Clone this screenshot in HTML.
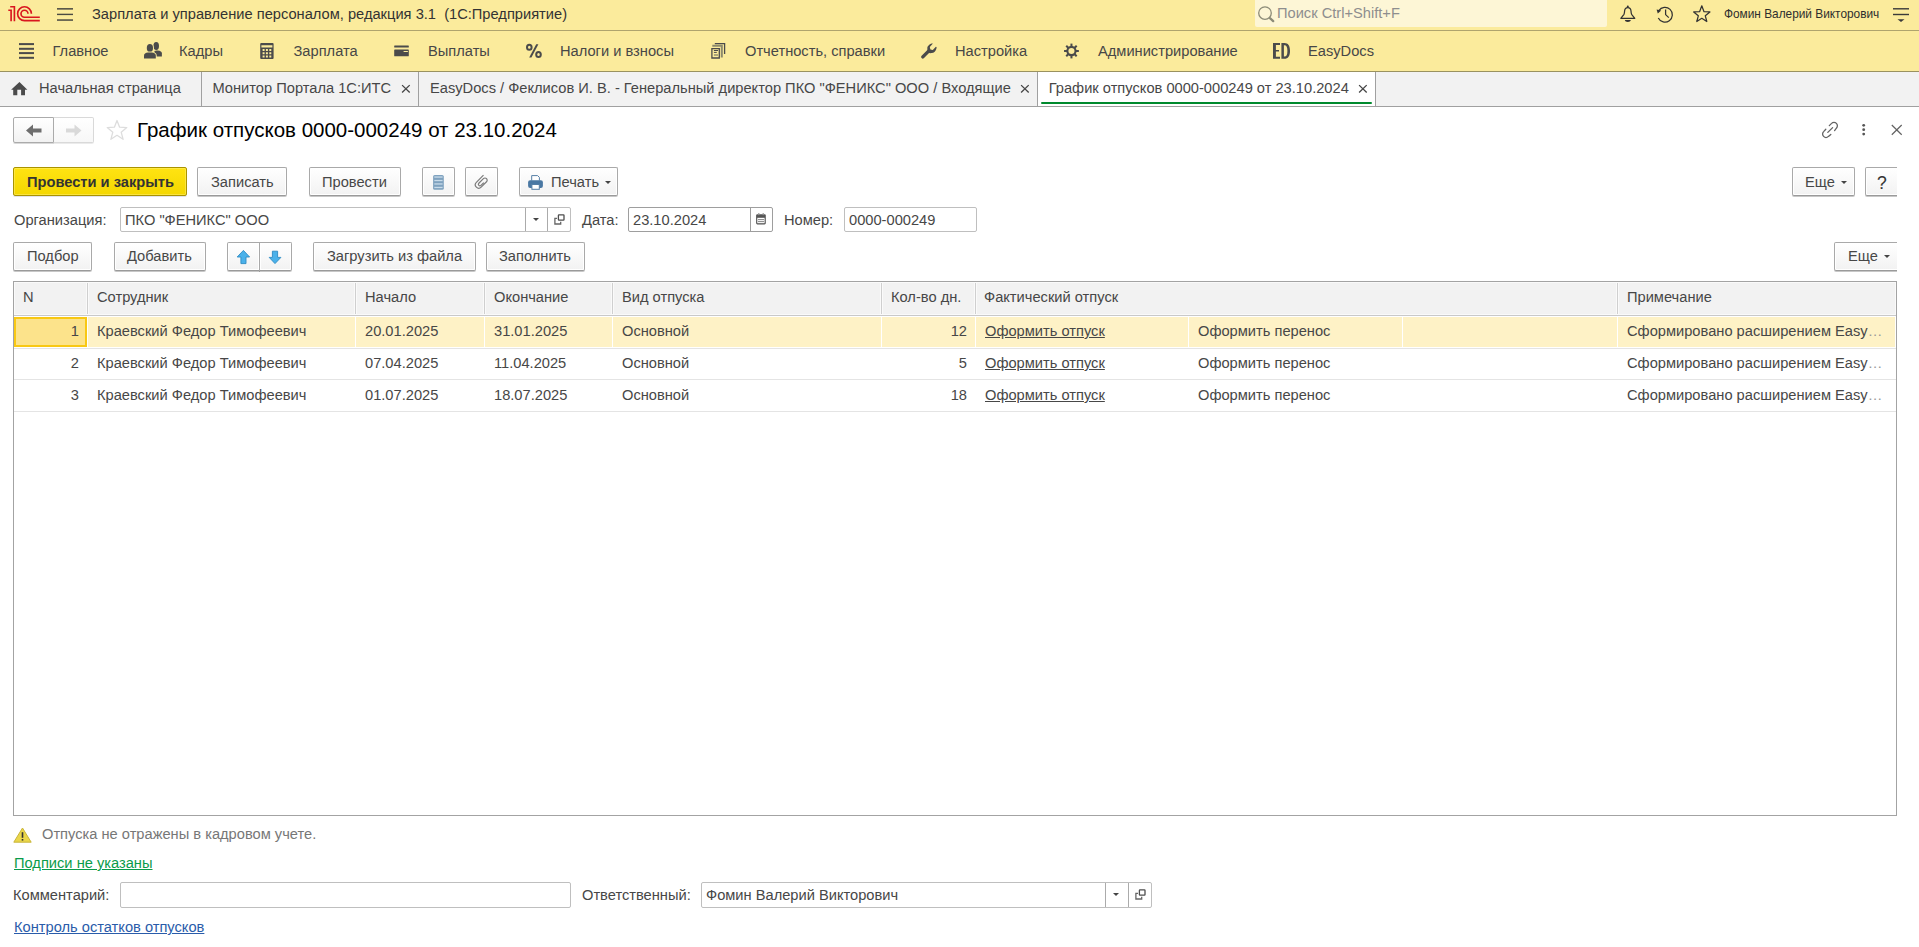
<!DOCTYPE html>
<html><head><meta charset="utf-8">
<style>
html,body{margin:0;padding:0;}
body{width:1919px;height:947px;overflow:hidden;position:relative;background:#fff;font-family:"Liberation Sans",sans-serif;font-size:14.667px;color:#474747;}
.a{position:absolute;}
.t{position:absolute;white-space:pre;line-height:16px;}
#top{left:0;top:0;width:1919px;height:30px;background:#FBEB9C;}
#topline{left:0;top:30px;width:1919px;height:1px;background:#AFA46D;}
#sec{left:0;top:31px;width:1919px;height:40px;background:#FBEB9C;}
#secline{left:0;top:71px;width:1919px;height:1px;background:#9A9260;}
#tabs{left:0;top:72px;width:1919px;height:34px;background:#F2F2F2;}
#tabline{left:0;top:106px;width:1919px;height:1px;background:#A0A0A0;}
.tsep{position:absolute;top:72px;width:1px;height:34px;background:#A0A0A0;}
.btn{position:absolute;box-sizing:border-box;border:1px solid #A9A9A9;border-bottom-color:#9A9A9A;border-radius:2px;background:linear-gradient(#FFFFFF,#F2F2F2);box-shadow:inset 0 0 0 1px #fff,0 1px 0 rgba(0,0,0,.22);}
.inp{position:absolute;box-sizing:border-box;border:1px solid #BFBFBF;border-radius:2px;background:#fff;}
.hsep{position:absolute;top:283px;width:1px;height:31px;background:#CFCFCF;}
.rsep{position:absolute;width:1px;background:#fff;}
.rowline{position:absolute;left:14px;width:1882px;height:1px;background:#E6E6E6;}
.lnk{text-decoration:underline;}
</style></head>
<body>
<!-- top bar -->
<div id="top" class="a"></div>
<div id="topline" class="a"></div>
<div id="sec" class="a"></div>
<div id="secline" class="a"></div>
<div id="tabs" class="a"></div>
<div id="tabline" class="a"></div>

<div class="t" style="left:92px;top:6px;color:#333;">Зарплата и управление персоналом, редакция 3.1  (1С:Предприятие)</div>
<div class="a" style="left:1255px;top:0;width:352px;height:27px;background:#FDF6D6;border-radius:0 0 2px 2px;"></div>
<div class="t" style="left:1277px;top:5px;color:#8E8E8E;">Поиск Ctrl+Shift+F</div>
<div class="t" style="left:1724px;top:6px;font-size:11.85px;color:#2E2E2E;">Фомин Валерий Викторович</div>

<!-- sections -->
<div class="t" style="left:52.5px;top:43px;">Главное</div>
<div class="t" style="left:179px;top:43px;">Кадры</div>
<div class="t" style="left:293.5px;top:43px;">Зарплата</div>
<div class="t" style="left:428px;top:43px;">Выплаты</div>
<div class="t" style="left:560px;top:43px;">Налоги и взносы</div>
<div class="t" style="left:745px;top:43px;">Отчетность, справки</div>
<div class="t" style="left:955px;top:43px;">Настройка</div>
<div class="t" style="left:1098px;top:43px;">Администрирование</div>
<div class="t" style="left:1308px;top:43px;">EasyDocs</div>

<!-- tabs -->
<div class="a" style="left:1038px;top:72px;width:337px;height:34px;background:#fff;"></div>
<div class="tsep" style="left:201px;"></div>
<div class="tsep" style="left:418px;"></div>
<div class="tsep" style="left:1037px;"></div>
<div class="tsep" style="left:1375px;"></div>
<div class="a" style="left:1041px;top:102px;width:331px;height:2px;background:#008A2E;border-radius:1px;"></div>
<div class="t" style="left:39px;top:80px;">Начальная страница</div>
<div class="t" style="left:212.5px;top:80px;">Монитор Портала 1С:ИТС</div>
<div class="t" style="left:430px;top:80px;">EasyDocs / Феклисов И. В. - Генеральный директор ПКО "ФЕНИКС" ООО / Входящие</div>
<div class="t" style="left:1048.7px;top:80px;">График отпусков 0000-000249 от 23.10.2024</div>

<!-- form header -->
<div class="t" style="left:137px;top:120px;font-size:20.5px;line-height:20px;color:#000;">График отпусков 0000-000249 от 23.10.2024</div>


<!-- nav buttons -->
<div class="a" style="left:13px;top:117px;width:41px;height:26px;box-sizing:border-box;border:1px solid #ABABAB;border-radius:2px 0 0 2px;background:linear-gradient(#fff,#F2F2F2);box-shadow:0 1px 0 rgba(0,0,0,.15);"></div>
<div class="a" style="left:54px;top:117px;width:40px;height:26px;box-sizing:border-box;border:1px solid #D9D9D9;border-left:none;border-radius:0 2px 2px 0;background:linear-gradient(#fff,#F7F7F7);box-shadow:0 1px 0 rgba(0,0,0,.08);"></div>
<svg class="a" style="left:26px;top:124px" width="16" height="13" viewBox="0 0 16 13"><path d="M0 6.5 L7 0.5 V4.5 H15.5 V8.5 H7 V12.5 Z" fill="#6E6E6E"/></svg>
<svg class="a" style="left:66px;top:124px" width="16" height="13" viewBox="0 0 16 13"><path d="M15.5 6.5 L8.5 0.5 V4.5 H0 V8.5 H8.5 V12.5 Z" fill="#D9D9D9"/></svg>
<svg class="a" style="left:106px;top:119px" width="22" height="23" viewBox="0 0 22 23"><path d="M11 1.5 L13.6 8.2 L20.8 8.6 L15.2 13.2 L17.1 20.3 L11 16.3 L4.9 20.3 L6.8 13.2 L1.2 8.6 L8.4 8.2 Z" fill="none" stroke="#DDDDDD" stroke-width="1.3" stroke-linejoin="round"/></svg>

<!-- command bar 1 -->
<div class="a" style="left:13px;top:167px;width:174px;height:29px;box-sizing:border-box;border:1px solid #A99300;border-radius:2px;background:linear-gradient(#FFE312,#F4D700);box-shadow:inset 0 0 0 1px rgba(255,240,120,.5),0 1px 0 rgba(60,60,120,.15);"></div>
<div class="t" style="left:27px;top:174px;font-weight:bold;color:#333;">Провести и закрыть</div>
<div class="btn" style="left:197px;top:167px;width:90px;height:29px;"></div>
<div class="t" style="left:211px;top:174px;">Записать</div>
<div class="btn" style="left:309px;top:167px;width:92px;height:29px;"></div>
<div class="t" style="left:322px;top:174px;">Провести</div>
<div class="btn" style="left:422px;top:167px;width:33px;height:29px;"></div>
<div class="btn" style="left:465px;top:167px;width:33px;height:29px;"></div>
<div class="btn" style="left:519px;top:167px;width:99px;height:29px;"></div>
<div class="t" style="left:551px;top:174px;">Печать</div>
<svg class="a" style="left:605px;top:181px" width="7" height="4" viewBox="0 0 7 4"><path d="M0 0 H6 L3 3 Z" fill="#444"/></svg>

<div class="btn" style="left:1792px;top:167px;width:63px;height:29px;"></div>
<div class="t" style="left:1805px;top:174px;">Еще</div>
<svg class="a" style="left:1841px;top:181px" width="7" height="4" viewBox="0 0 7 4"><path d="M0 0 H6 L3 3 Z" fill="#444"/></svg>
<div class="btn" style="left:1865px;top:167px;width:40px;height:29px;"></div>
<div class="t" style="left:1877px;top:175px;font-size:17.5px;color:#333;-webkit-text-stroke:0.12px #333;">?</div>

<!-- fields row -->
<div class="t" style="left:14px;top:212px;">Организация:</div>
<div class="inp" style="left:120px;top:207px;width:451px;height:25px;"></div>
<div class="a" style="left:525px;top:208px;width:1px;height:23px;background:#ABABAB;"></div>
<div class="a" style="left:547px;top:208px;width:1px;height:23px;background:#ABABAB;"></div>
<svg class="a" style="left:533px;top:218px" width="6" height="3" viewBox="0 0 6 3"><path d="M0 0 H6 L3 3 Z" fill="#444"/></svg>
<div class="t" style="left:125px;top:212px;">ПКО "ФЕНИКС" ООО</div>
<div class="t" style="left:582px;top:212px;">Дата:</div>
<div class="inp" style="left:628px;top:207px;width:145px;height:25px;border-color:#9E9E9E;"></div>
<div class="a" style="left:750px;top:208px;width:1px;height:23px;background:#9E9E9E;"></div>
<div class="t" style="left:633px;top:212px;">23.10.2024</div>
<div class="t" style="left:784px;top:212px;">Номер:</div>
<div class="inp" style="left:844px;top:207px;width:133px;height:25px;"></div>
<div class="t" style="left:849px;top:212px;">0000-000249</div>

<!-- command bar 2 -->
<div class="btn" style="left:13px;top:242px;width:79px;height:29px;"></div>
<div class="t" style="left:27px;top:248px;">Подбор</div>
<div class="btn" style="left:114px;top:242px;width:92px;height:29px;"></div>
<div class="t" style="left:127px;top:248px;">Добавить</div>
<div class="btn" style="left:227px;top:242px;width:33px;height:29px;border-radius:2px 0 0 2px;"></div>
<div class="btn" style="left:259px;top:242px;width:33px;height:29px;border-radius:0 2px 2px 0;"></div>
<div class="btn" style="left:313px;top:242px;width:163px;height:29px;"></div>
<div class="t" style="left:327px;top:248px;">Загрузить из файла</div>
<div class="btn" style="left:486px;top:242px;width:99px;height:29px;"></div>
<div class="t" style="left:499px;top:248px;">Заполнить</div>
<div class="btn" style="left:1834px;top:242px;width:71px;height:29px;"></div>
<div class="t" style="left:1848px;top:248px;">Еще</div>
<svg class="a" style="left:1884px;top:255px" width="7" height="4" viewBox="0 0 7 4"><path d="M0 0 H6 L3 3 Z" fill="#444"/></svg>
<div class="a" style="left:1897px;top:160px;width:22px;height:120px;background:#fff;"></div>


<!-- table -->
<div class="a" style="left:13px;top:281px;width:1884px;height:535px;box-sizing:border-box;border:1px solid #A3A3A3;background:#fff;"></div>
<div class="a" style="left:14px;top:282px;width:1882px;height:33px;box-sizing:border-box;border:1px solid #FAFAFA;background:#F2F2F2;"></div>
<div class="a" style="left:14px;top:315px;width:1882px;height:1px;background:#C9C9C9;"></div>
<div class="a" style="left:86px;top:283px;width:3px;height:31px;background:#FAFAFA;"></div><div class="a" style="left:87px;top:283px;width:1px;height:31px;background:#CFCFCF;"></div>
<div class="a" style="left:354px;top:283px;width:3px;height:31px;background:#FAFAFA;"></div><div class="a" style="left:355px;top:283px;width:1px;height:31px;background:#CFCFCF;"></div>
<div class="a" style="left:483px;top:283px;width:3px;height:31px;background:#FAFAFA;"></div><div class="a" style="left:484px;top:283px;width:1px;height:31px;background:#CFCFCF;"></div>
<div class="a" style="left:611px;top:283px;width:3px;height:31px;background:#FAFAFA;"></div><div class="a" style="left:612px;top:283px;width:1px;height:31px;background:#CFCFCF;"></div>
<div class="a" style="left:880px;top:283px;width:3px;height:31px;background:#FAFAFA;"></div><div class="a" style="left:881px;top:283px;width:1px;height:31px;background:#CFCFCF;"></div>
<div class="a" style="left:974px;top:283px;width:3px;height:31px;background:#FAFAFA;"></div><div class="a" style="left:975px;top:283px;width:1px;height:31px;background:#CFCFCF;"></div>
<div class="a" style="left:1616px;top:283px;width:3px;height:31px;background:#FAFAFA;"></div><div class="a" style="left:1617px;top:283px;width:1px;height:31px;background:#CFCFCF;"></div>
<div class="a" style="left:14px;top:317px;width:1881px;height:30px;background:#FEF2C6;"></div>
<div class="a" style="left:87px;top:317px;width:1px;height:30px;background:#fff;"></div>
<div class="a" style="left:355px;top:317px;width:1px;height:30px;background:#fff;"></div>
<div class="a" style="left:484px;top:317px;width:1px;height:30px;background:#fff;"></div>
<div class="a" style="left:612px;top:317px;width:1px;height:30px;background:#fff;"></div>
<div class="a" style="left:881px;top:317px;width:1px;height:30px;background:#fff;"></div>
<div class="a" style="left:975px;top:317px;width:1px;height:30px;background:#fff;"></div>
<div class="a" style="left:1188px;top:317px;width:1px;height:30px;background:#fff;"></div>
<div class="a" style="left:1402px;top:317px;width:1px;height:30px;background:#fff;"></div>
<div class="a" style="left:1617px;top:317px;width:1px;height:30px;background:#fff;"></div>
<div class="a" style="left:14px;top:317px;width:73px;height:30px;box-sizing:border-box;border:2px solid #F8C814;background:#FCE38B;"></div>
<div class="a" style="left:14px;top:348px;width:1882px;height:1px;background:#E4E4E4;"></div>
<div class="a" style="left:14px;top:379px;width:1882px;height:1px;background:#E4E4E4;"></div>
<div class="a" style="left:14px;top:411px;width:1882px;height:1px;background:#E4E4E4;"></div>
<div class="t" style="left:23px;top:289px;">N</div>
<div class="t" style="left:97px;top:289px;">Сотрудник</div>
<div class="t" style="left:365px;top:289px;">Начало</div>
<div class="t" style="left:494px;top:289px;">Окончание</div>
<div class="t" style="left:622px;top:289px;">Вид отпуска</div>
<div class="t" style="left:891px;top:289px;">Кол-во дн.</div>
<div class="t" style="left:984px;top:289px;">Фактический отпуск</div>
<div class="t" style="left:1627px;top:289px;">Примечание</div>
<div class="t" style="left:20px;width:59px;text-align:right;top:323px;">1</div>
<div class="t" style="left:97px;top:323px;">Краевский Федор Тимофеевич</div>
<div class="t" style="left:365px;top:323px;">20.01.2025</div>
<div class="t" style="left:494px;top:323px;">31.01.2025</div>
<div class="t" style="left:622px;top:323px;">Основной</div>
<div class="t" style="left:880px;width:87px;text-align:right;top:323px;">12</div>
<div class="t lnk" style="left:985px;top:323px;">Оформить отпуск</div>
<div class="t" style="left:1198px;top:323px;">Оформить перенос</div>
<div class="t" style="left:1627px;top:323px;">Сформировано расширением Easy<span style="color:#999">…</span></div>
<div class="t" style="left:20px;width:59px;text-align:right;top:355px;">2</div>
<div class="t" style="left:97px;top:355px;">Краевский Федор Тимофеевич</div>
<div class="t" style="left:365px;top:355px;">07.04.2025</div>
<div class="t" style="left:494px;top:355px;">11.04.2025</div>
<div class="t" style="left:622px;top:355px;">Основной</div>
<div class="t" style="left:880px;width:87px;text-align:right;top:355px;">5</div>
<div class="t lnk" style="left:985px;top:355px;">Оформить отпуск</div>
<div class="t" style="left:1198px;top:355px;">Оформить перенос</div>
<div class="t" style="left:1627px;top:355px;">Сформировано расширением Easy<span style="color:#999">…</span></div>
<div class="t" style="left:20px;width:59px;text-align:right;top:387px;">3</div>
<div class="t" style="left:97px;top:387px;">Краевский Федор Тимофеевич</div>
<div class="t" style="left:365px;top:387px;">01.07.2025</div>
<div class="t" style="left:494px;top:387px;">18.07.2025</div>
<div class="t" style="left:622px;top:387px;">Основной</div>
<div class="t" style="left:880px;width:87px;text-align:right;top:387px;">18</div>
<div class="t lnk" style="left:985px;top:387px;">Оформить отпуск</div>
<div class="t" style="left:1198px;top:387px;">Оформить перенос</div>
<div class="t" style="left:1627px;top:387px;">Сформировано расширением Easy<span style="color:#999">…</span></div>

<!-- bottom -->
<svg class="a" style="left:13px;top:827px" width="19" height="16" viewBox="0 0 19 16"><path d="M9.5 1 L18.2 15.2 H0.8 Z" fill="#EAD64A" stroke="#C9B53A" stroke-width="1" stroke-linejoin="round"/><rect x="8.7" y="5.2" width="1.6" height="5.6" fill="#333"/><rect x="8.7" y="12" width="1.6" height="1.6" fill="#333"/></svg>
<div class="t" style="left:42px;top:826px;color:#777;">Отпуска не отражены в кадровом учете.</div>
<div class="t lnk" style="left:14px;top:855px;color:#0A9B4A;">Подписи не указаны</div>
<div class="t" style="left:13px;top:887px;">Комментарий:</div>
<div class="inp" style="left:120px;top:882px;width:451px;height:26px;"></div>
<div class="t" style="left:582px;top:887px;">Ответственный:</div>
<div class="inp" style="left:701px;top:882px;width:451px;height:26px;"></div>
<div class="a" style="left:1105px;top:883px;width:1px;height:24px;background:#ABABAB;"></div>
<div class="a" style="left:1128px;top:883px;width:1px;height:24px;background:#ABABAB;"></div>
<svg class="a" style="left:1113px;top:893px" width="6" height="3" viewBox="0 0 6 3"><path d="M0 0 H6 L3 3 Z" fill="#444"/></svg>
<div class="t" style="left:706px;top:887px;">Фомин Валерий Викторович</div>
<div class="t lnk" style="left:14px;top:919px;color:#2A5CAA;">Контроль остатков отпусков</div>


<!-- ICONS -->
<svg class="a" style="left:0;top:0" width="44" height="26" viewBox="0 0 44 26"><g fill="none" stroke="#D9161F" stroke-width="1.65"><path d="M8.3 10.2 H11.1 V21.2 M10.2 6.7 H14.4 V21.2"/><path d="M31.4 13.7 A6.9 6.9 0 1 0 24.5 20.6 H39.8"/><path d="M28 13.7 A3.5 3.5 0 1 0 24.5 17.2 H39.8"/></g></svg>
<svg class="a" style="left:0;top:0" width="80" height="26" viewBox="0 0 80 26"><g fill="#4A4A42"><rect x="57" y="8.1" width="16" height="1.5"/><rect x="57" y="13.7" width="16" height="1.4"/><rect x="57" y="19.3" width="16" height="1.5"/></g></svg>
<svg class="a" style="left:1250px;top:0" width="30" height="27" viewBox="1250 0 30 27"><circle cx="1265" cy="13.1" r="6.3" fill="none" stroke="#8C8B78" stroke-width="1.3"/><path d="M1270.2 18.3 L1273.2 21.1" stroke="#8C8B78" stroke-width="2.3" stroke-linecap="round"/></svg>
<svg class="a" style="left:1610px;top:0" width="110" height="28" viewBox="1610 0 110 28"><g fill="none" stroke="#333" stroke-width="1.25" stroke-linejoin="round">
<path d="M1620.8 18.3 L1624 14.3 C1624.4 13.5 1624.5 12.6 1624.6 11 C1624.8 8.6 1626 7.6 1627.8 7.6 C1629.6 7.6 1630.8 8.6 1631 11 C1631.1 12.6 1631.2 13.5 1631.6 14.3 L1634.8 18.3 Z"/>
<path d="M1658.3 18 A7.4 7.4 0 1 0 1658.8 10.6"/><path d="M1665.6 9.4 V14.6 L1668.8 17.6"/>
<path d="M1701.8 5.8 L1704 11.7 L1709.9 11.9 L1705.3 15.8 L1706.8 21.5 L1701.8 18.3 L1696.8 21.5 L1698.3 15.8 L1693.7 11.9 L1699.6 11.7 Z"/></g>
<g fill="#333"><circle cx="1627.8" cy="6.6" r="1"/><path d="M1624.8 19.9 H1630.9 C1630.6 21.2 1629.4 21.9 1627.8 21.9 C1626.2 21.9 1625 21.2 1624.8 19.9 Z"/><path d="M1656.6 9.5 L1661.2 10.6 L1657.8 13.6 Z"/></g></svg>
<svg class="a" style="left:1888px;top:0" width="28" height="28" viewBox="1888 0 28 28"><g fill="#3A3A3A"><rect x="1893" y="8.1" width="16" height="1.4"/><rect x="1893" y="13.8" width="16" height="1.4"/><path d="M1897.5 19.2 H1904.5 L1901 21.9 Z"/></g></svg>

<!-- section icons -->
<svg class="a" style="left:0;top:31px" width="1300" height="40" viewBox="0 31 1300 40"><g fill="#4B4B4B">
<rect x="19" y="43.1" width="15" height="2"/><rect x="19" y="47.8" width="15" height="2"/><rect x="19" y="52.1" width="15" height="2"/><rect x="19" y="56.8" width="15" height="2"/>
<ellipse cx="156.2" cy="46" rx="2.8" ry="3.9"/><path d="M154.4 51.2 C155 50.8 156 50.6 157.6 50.6 C160.5 50.8 161.9 51.8 161.9 53.5 V56.4 H154.8 Z"/>
<ellipse cx="149.9" cy="47.9" rx="3.1" ry="3.9" stroke="#FBEB9C" stroke-width="1.8" paint-order="stroke"/><path d="M144 58.6 V55.6 C144 53.8 145.5 52.8 148 52.6 H151.8 C154.3 52.8 155.8 53.8 155.8 55.6 V58.6 Z" stroke="#FBEB9C" stroke-width="1.8" paint-order="stroke"/>
<path fill-rule="evenodd" d="M260.2 44 Q260.2 43 261.2 43 H272.6 Q273.6 43 273.6 44 V58 Q273.6 59 272.6 59 H261.2 Q260.2 59 260.2 58 Z M261.4 45.3 H272.4 V47.4 H261.4 Z M262.6 48.9 H264.6 V50.9 H262.6 Z M265.9 48.9 H267.9 V50.9 H265.9 Z M269.3 48.9 H271.3 V50.9 H269.3 Z M262.6 52.3 H264.6 V54.3 H262.6 Z M265.9 52.3 H267.9 V54.3 H265.9 Z M269.3 52.3 H271.3 V54.3 H269.3 Z M262.6 55.6 H264.6 V57.6 H262.6 Z M265.9 55.6 H267.9 V57.6 H265.9 Z M269.3 55.6 H271.3 V57.6 H269.3 Z"/>
<rect x="394.2" y="45.5" width="14.6" height="2" rx="0.5"/><path fill-rule="evenodd" d="M394.2 50.2 Q394.2 49.6 394.8 49.6 H408.2 Q408.8 49.6 408.8 50.2 V55.7 Q408.8 56.3 408.2 56.3 H394.8 Q394.2 56.3 394.2 55.7 Z M403.6 50.9 H407.9 V52.1 H403.6 Z"/>
<path d="M536.2 44.2 H538.4 L531.4 57.5 H529.2 Z"/>
</g>
<g fill="none" stroke="#4B4B4B">
<ellipse cx="529.3" cy="47.3" rx="2.3" ry="2.5" stroke-width="2"/><ellipse cx="538.5" cy="54.5" rx="2.3" ry="2.5" stroke-width="2"/>
<path d="M711.9 48.6 H719.3 V58 H711.9 Z" stroke-width="1.3"/>
<path d="M712.3 45.7 H721.8 V57.5" stroke="#8D8A6C" stroke-width="2"/>
<path d="M714.8 43.6 H724.6 V54" stroke-width="1.3"/>
<path d="M713.9 50.5 H718 M713.9 52.4 H716.8" stroke-width="1"/><path d="M713.9 55 H718" stroke="#8D8A6C" stroke-width="1.4"/>
<path d="M922.8 56.9 L928.8 50.9" stroke-width="3.4" stroke-linecap="round"/>
<circle cx="1071.45" cy="51" r="4.1" stroke-width="2.1"/>
</g>
<g fill="#4B4B4B">
<path d="M927.5 52 L927.3 47.8 C927.5 46 929 44.4 931.6 43.4 L932.9 43.5 L929.8 46.9 L930.4 49.4 L932.8 50 L935.9 46.7 L936.6 47 C936.6 49.5 935.5 51.5 933.3 52.7 L930 53.3 Z"/>
<g transform="translate(1071.45 51)"><rect x="-1" y="-7.4" width="2" height="3.6"/><rect x="-1" y="-7.4" width="2" height="3.6" transform="rotate(45)"/><rect x="-1" y="-7.4" width="2" height="3.6" transform="rotate(90)"/><rect x="-1" y="-7.4" width="2" height="3.6" transform="rotate(135)"/><rect x="-1" y="-7.4" width="2" height="3.6" transform="rotate(180)"/><rect x="-1" y="-7.4" width="2" height="3.6" transform="rotate(225)"/><rect x="-1" y="-7.4" width="2" height="3.6" transform="rotate(270)"/><rect x="-1" y="-7.4" width="2" height="3.6" transform="rotate(315)"/></g>
<path d="M1273 43.1 H1280 V45 H1275.9 V49.9 H1279 V51.6 H1275.9 V56.8 H1280 V58.7 H1273 Z"/>
<path fill-rule="evenodd" d="M1281.4 43.1 H1284.5 C1288 43.1 1290 45.8 1290 50.9 C1290 56 1288 58.7 1284.5 58.7 H1281.4 Z M1283.9 45.2 V56.6 H1284.4 C1286.6 56.6 1287.4 54.6 1287.4 50.9 C1287.4 47.2 1286.6 45.2 1284.4 45.2 Z"/>
</g></svg>
<circle cx="0" cy="0" r="0"/>

<!-- home, tab closes -->
<svg class="a" style="left:0;top:72px" width="30" height="34" viewBox="0 72 30 34"><path d="M11.1 89.8 L19.45 81.9 L27.4 89.8 H25 V95.3 H21.1 V89.8 H17.3 V95.3 H13.2 V89.8 Z" fill="#4B4B4B"/></svg>
<svg class="a" style="left:401px;top:84px" width="10" height="10" viewBox="0 0 10 10"><path d="M1.1 1.1 L8.7 8.5 M8.7 1.1 L1.1 8.5" stroke="#454545" stroke-width="1.3"/></svg>
<svg class="a" style="left:1020px;top:84px" width="10" height="10" viewBox="0 0 10 10"><path d="M1.1 1.1 L8.7 8.5 M8.7 1.1 L1.1 8.5" stroke="#454545" stroke-width="1.3"/></svg>
<svg class="a" style="left:1358px;top:84px" width="10" height="10" viewBox="0 0 10 10"><path d="M1.1 1.1 L8.7 8.5 M8.7 1.1 L1.1 8.5" stroke="#454545" stroke-width="1.3"/></svg>

<!-- form top-right icons -->
<svg class="a" style="left:1815px;top:115px" width="95" height="30" viewBox="1815 115 95 30"><g fill="none" stroke="#636363" stroke-width="1.3" stroke-linecap="round">
<path d="M1829.3 125.6 L1831.6 123.4 A3.3 3.3 0 0 1 1836.4 128.2 L1834.6 130.6"/>
<path d="M1825.8 129.3 L1823.6 131.6 A3.3 3.3 0 0 0 1828.4 136.4 L1830.8 134.4"/>
<path d="M1827.8 132.4 L1832.6 127.6"/>
<path d="M1891.8 125 L1901.7 134.8 M1901.7 125 L1891.8 134.8" stroke-linecap="butt" stroke-width="1.2"/>
</g><g fill="#555"><circle cx="1863.7" cy="125.3" r="1.4"/><circle cx="1863.7" cy="129.7" r="1.4"/><circle cx="1863.7" cy="134.1" r="1.4"/></g></svg>

<!-- button icons -->
<svg class="a" style="left:420px;top:165px" width="200" height="32" viewBox="420 165 200 32">
<rect x="433.1" y="175" width="10.7" height="14.8" rx="1.6" fill="#7FA2BF"/>
<g fill="#C9DCEA"><rect x="434.3" y="176.4" width="8.3" height="1.3"/><rect x="434.3" y="179.9" width="8.3" height="1.3"/><rect x="434.3" y="183.3" width="8.3" height="1.3"/><rect x="434.3" y="186.8" width="8.3" height="1.3"/></g>
<g transform="translate(481.3 182.2) rotate(45)" fill="none" stroke="#7A7A7A" stroke-width="1.2"><path d="M-3.4 -6.5 V3.6 A3.4 3.4 0 0 0 3.4 3.6 V-4 A2.2 2.2 0 0 0 -1 -4 V2.5 A1.5 1.5 0 0 0 2 2.5 V-1.5"/></g>
<path d="M531.7 180.5 V175.6 H537.6 L539.4 177.4 V180.5" fill="#fff" stroke="#557FA6" stroke-width="1"/>
<rect x="528.1" y="180.2" width="14.8" height="7.8" rx="2" fill="#4A78A3"/>
<rect x="531.9" y="184.5" width="7.4" height="4.8" fill="#fff" stroke="#557FA6" stroke-width="1"/>
</svg>
<svg class="a" style="left:225px;top:240px" width="70" height="33" viewBox="225 240 70 33"><g fill="#4AB1EA" stroke="#2D8BC4" stroke-width="0.9" stroke-linejoin="miter">
<path d="M243.4 250.4 L249.6 257 H246 V263.6 H240.9 V257 H237.2 Z"/>
<path d="M272.4 251.2 H277.6 V257.4 H280.9 L275 263.6 L269.2 257.4 H272.4 Z"/></g></svg>

<!-- input icons -->
<svg class="a" style="left:550px;top:210px" width="20" height="20" viewBox="550 210 20 20"><g fill="none" stroke="#4D4D4D" stroke-width="1.3"><path d="M557 218.3 H554.9 V224 H560.7 V221.8" stroke="#666"/><rect x="558.4" y="214.9" width="5.6" height="5.3" rx="0.6"/></g></svg>
<svg class="a" style="left:1131px;top:885px" width="20" height="20" viewBox="550 210 20 20"><g fill="none" stroke="#4D4D4D" stroke-width="1.3"><path d="M557 218.3 H554.9 V224 H560.7 V221.8" stroke="#666"/><rect x="558.4" y="214.9" width="5.6" height="5.3" rx="0.6"/></g></svg>
<svg class="a" style="left:752px;top:210px" width="20" height="20" viewBox="752 210 20 20"><rect x="756.1" y="214.2" width="9.7" height="10.2" rx="1.3" fill="#555"/><rect x="757.3" y="217.8" width="7.3" height="5.4" fill="#fff"/><g fill="#777"><rect x="758" y="219.2" width="6" height="0.9"/><rect x="758" y="221.2" width="6" height="0.9"/></g><g fill="#999"><rect x="758.2" y="213" width="1.2" height="2.2"/><rect x="762.6" y="213" width="1.2" height="2.2"/></g></svg>

</body></html>
